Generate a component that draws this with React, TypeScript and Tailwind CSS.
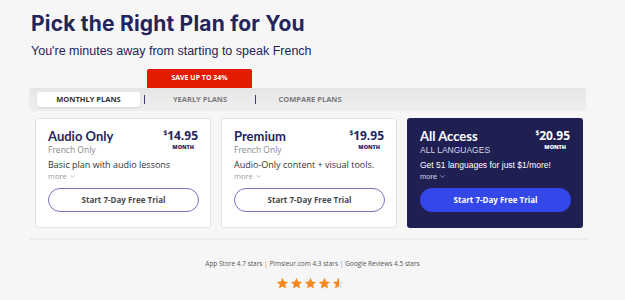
import { ChevronDown } from "lucide-react";

const plans = [
  {
    name: "Audio Only",
    sub: "French Only",
    price: "14.95",
    desc: "Basic plan with audio lessons",
    dark: false,
  },
  {
    name: "Premium",
    sub: "French Only",
    price: "19.95",
    desc: "Audio-Only content + visual tools.",
    dark: false,
  },
  {
    name: "All Access",
    sub: "ALL LANGUAGES",
    price: "20.95",
    desc: "Get 51 languages for just $1/more!",
    dark: true,
  },
];

function Star({ half }: { half?: boolean }) {
  return (
    <svg width="13" height="13" viewBox="0 0 24 24">
      <defs>
        <linearGradient id="halfstar">
          <stop offset="55%" stopColor="#f7881f" />
          <stop offset="55%" stopColor="#e4e4e4" />
        </linearGradient>
      </defs>
      <path
        d="M12 1.5l3.1 7 7.4.6-5.6 4.9 1.7 7.4L12 17.5l-6.6 3.9 1.7-7.4-5.6-4.9 7.4-.6z"
        fill={half ? "url(#halfstar)" : "#f7881f"}
      />
    </svg>
  );
}

function PlanCard({ plan }: { plan: (typeof plans)[number] }) {
  const dark = plan.dark;
  return (
    <div
      className={
        dark
          ? "w-[176px] h-[110px] rounded-[3px] bg-[#1f1f52] px-[13px] pt-[11px]"
          : "w-[176px] h-[110px] rounded-[3px] bg-white border border-[#e3e3e3] px-[12px] pt-[10px]"
      }
    >
      <div className="flex justify-between">
        <div>
          <div
            className={
              dark
                ? "text-[13px] font-bold leading-[15px] text-white font-['Lato',sans-serif]"
                : "text-[13px] font-bold leading-[15px] text-[#25255e] font-['Lato',sans-serif]"
            }
          >
            {plan.name}
          </div>
          <div
            className={
              dark
                ? "text-[8.5px] leading-[12px] text-[#d6d6e4] font-['Liberation_Sans',sans-serif]"
                : "text-[8.5px] leading-[12px] text-[#8a8a8a] font-['Open_Sans',sans-serif]"
            }
          >
            {plan.sub}
          </div>
        </div>
        <div className="flex flex-col items-center">
          <div
            className={
              dark
                ? "flex items-start text-white font-['Open_Sans',sans-serif] font-bold"
                : "flex items-start text-[#25255e] font-['Open_Sans',sans-serif] font-bold"
            }
          >
            <span className="text-[6.5px] leading-[8px]">$</span>
            <span className="text-[12px] leading-[14px]">{plan.price}</span>
          </div>
          <div
            className={
              dark
                ? "text-[5.5px] font-extrabold leading-[8px] text-white font-['Open_Sans',sans-serif] ml-[5px]"
                : "text-[5.5px] font-extrabold leading-[8px] text-[#25255e] font-['Open_Sans',sans-serif] ml-[5px]"
            }
          >
            MONTH
          </div>
        </div>
      </div>
      <p
        className={
          dark
            ? "mt-[3px] text-[8.5px] leading-[12px] text-white font-['Liberation_Sans',sans-serif]"
            : "mt-[3px] text-[9px] leading-[12px] text-[#333] font-['Open_Sans',sans-serif]"
        }
      >
        {plan.desc}
      </p>
      <div
        className={
          dark
            ? "flex items-center gap-[2px] text-[7.5px] leading-[11px] text-[#d6d6e4] font-['Liberation_Sans',sans-serif]"
            : "flex items-center gap-[2px] text-[7.5px] leading-[11px] text-[#9a9a9a] font-['Open_Sans',sans-serif]"
        }
      >
        more <ChevronDown size={7} strokeWidth={2} />
      </div>
      <button
        className={
          dark
            ? "mt-[6px] w-[151px] h-[24px] rounded-full bg-[#3447e8] text-white text-[8px] font-bold font-['Open_Sans',sans-serif]"
            : "mt-[6px] w-[151px] h-[24px] rounded-full border border-[#7a72bd] bg-white text-[#4a4a4a] text-[8px] font-bold font-['Open_Sans',sans-serif]"
        }
      >
        Start 7-Day Free Trial
      </button>
    </div>
  );
}

export default function App() {
  return (
    <div className="w-[625px] h-[300px] bg-[#f6f6f6] overflow-hidden">
      <div className="pl-[31px] pt-[11px]">
        <h1 className="text-[21px] font-bold leading-[26px] text-[#24245a] font-['Inter',sans-serif] tracking-[0.2px]">
          Pick the Right Plan for You
        </h1>
        <p className="mt-[6px] text-[12.5px] leading-[16px] text-[#24245a] font-['Liberation_Sans',sans-serif]">
          You're minutes away from starting to speak French
        </p>
      </div>

      <div className="ml-[147px] mt-[10px] w-[105px] h-[19px] bg-[#e31b00] rounded-t-[2px] flex items-center justify-center text-white text-[7px] font-bold font-['Open_Sans',sans-serif]">
        SAVE UP TO 34%
      </div>

      <div className="ml-[29px] w-[557px] h-[23px] rounded-[3px] bg-gradient-to-b from-[#e6e6e6] to-[#efefef] flex items-center px-[8px] font-['Open_Sans',sans-serif] text-[7.5px] font-bold">
        <div className="w-[103px] h-[15px] rounded-[3px] bg-white shadow-[0_1px_2px_rgba(0,0,0,0.12)] flex items-center justify-center text-[#333]">
          MONTHLY PLANS
        </div>
        <div className="ml-[4px] w-[1px] h-[9px] bg-[#3c3c70]" />
        <div className="w-[110px] flex justify-center text-[#7a7a7a]">YEARLY PLANS</div>
        <div className="w-[1px] h-[9px] bg-[#3c3c70]" />
        <div className="w-[108px] flex justify-center text-[#7a7a7a]">COMPARE PLANS</div>
      </div>

      <div className="mt-[7px] ml-[35px] flex gap-[10px]">
        {plans.map((p) => (
          <PlanCard key={p.name} plan={p} />
        ))}
      </div>

      <div className="ml-[30px] w-[558px] mt-[10px] h-[2px] bg-[#ebebeb]" />

      <div className="mt-[19px] text-center text-[6.5px] leading-[10px] text-[#555] font-['Open_Sans',sans-serif]">
        App Store 4.7 stars <span className="text-[#e0893a]">|</span> Pimsleur.com 4.3 stars{" "}
        <span className="text-[#7aa3d8]">|</span> Google Reviews 4.5 stars
      </div>
      <div className="mt-[8px] ml-[-4px] flex justify-center gap-[1px]">
        <Star />
        <Star />
        <Star />
        <Star />
        <Star half />
      </div>
    </div>
  );
}
